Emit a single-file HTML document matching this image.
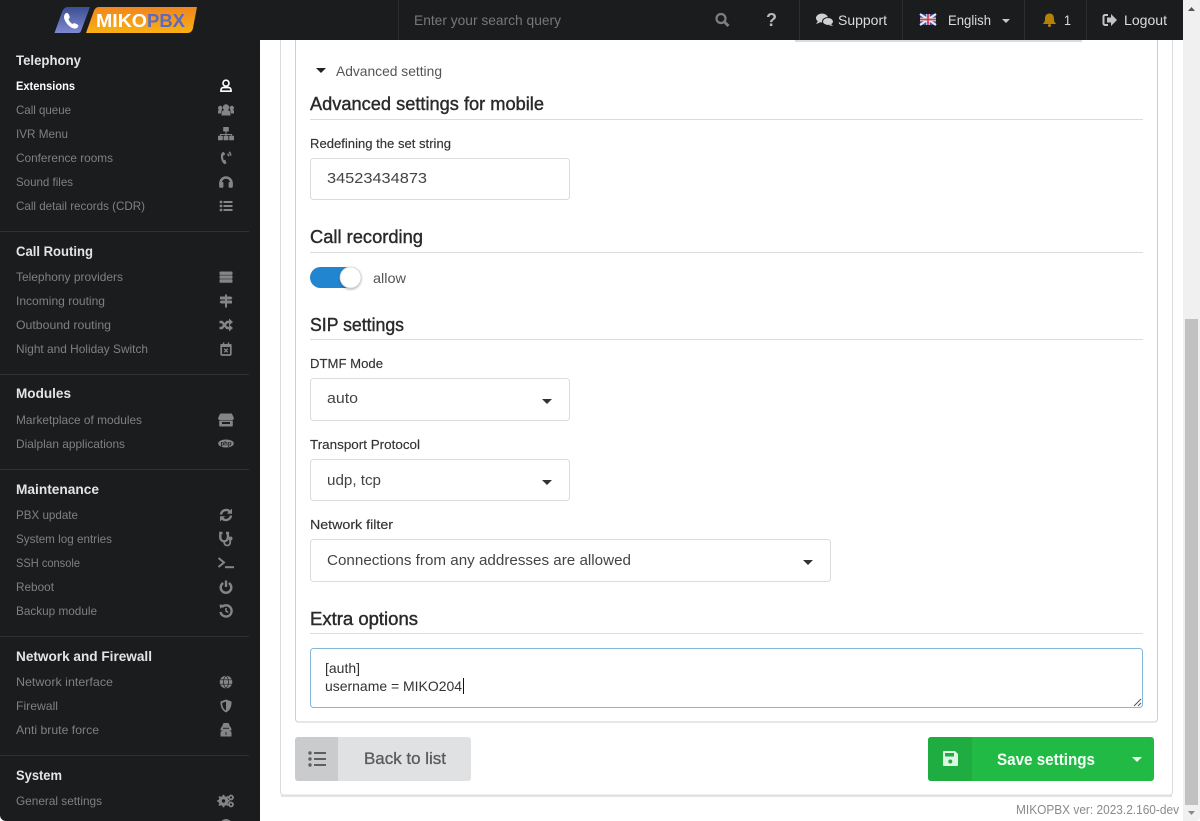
<!DOCTYPE html>
<html lang="en"><head><meta charset="utf-8"><title>MikoPBX</title>
<style>
html,body{margin:0;padding:0;width:1200px;height:821px;overflow:hidden;background:#fff}
svg{position:absolute;left:0;top:0;display:block}
text{font-family:"Liberation Sans",sans-serif;white-space:pre}
.h{font-size:13.5px;font-weight:700;fill:#e4e4e4}
.i{font-size:12px;fill:#808080}
.t{font-size:14px;fill:#dcdcdc}
.hd{font-size:18px;fill:#2a2a2a;stroke:#2a2a2a;stroke-width:.4}
.l{font-size:13px;fill:#333;stroke:#333;stroke-width:.15}
.v{font-size:15px;fill:#444}
.ic{fill:#858585}
.st{fill:none;stroke:#858585;stroke-width:2.400}
</style></head><body>
<svg width="1200" height="821" viewBox="0 0 1200 821" xmlns="http://www.w3.org/2000/svg">
<defs>
<linearGradient id="o" x1="0" y1="0" x2="0" y2="1"><stop offset="0" stop-color="#ef8520"/><stop offset="1" stop-color="#f9b113"/></linearGradient>
<linearGradient id="b" x1="0" y1="0" x2="0" y2="1"><stop offset="0" stop-color="#3c4f92"/><stop offset="1" stop-color="#7f88d2"/></linearGradient>
<filter id="sh" x="-30%" y="-30%" width="160%" height="160%"><feDropShadow dx="0" dy="1" stdDeviation="1" flood-color="#000" flood-opacity=".35"/></filter>
</defs>

<!-- main card -->
<rect x="281" y="795" width="891" height="2" fill="#e4e4e4"/>
<rect x="280.500" y="20" width="892" height="775" rx="3" fill="#fff" stroke="#dcdcdc"/>
<rect x="295.500" y="20" width="862" height="702" rx="3" fill="#fff" stroke="#cfcfcf"/>

<!-- advanced -->
<path d="M316 68h10l-5 5z" fill="#222"/>
<text x="336" y="76" font-size="14" fill="#555" textLength="106" lengthAdjust="spacingAndGlyphs">Advanced setting</text>
<text class="hd" x="310" y="110" textLength="234" lengthAdjust="spacingAndGlyphs">Advanced settings for mobile</text>
<rect x="310" y="119" width="833" height="1" fill="#dcdcdc"/>
<text class="l" x="310" y="148" textLength="141" lengthAdjust="spacingAndGlyphs">Redefining the set string</text>
<rect x="310.500" y="158.500" width="259" height="41" rx="3" fill="#fff" stroke="#dcdcdc"/>
<text class="v" x="327" y="183" textLength="100" lengthAdjust="spacingAndGlyphs">34523434873</text>

<text class="hd" x="310" y="243" textLength="113" lengthAdjust="spacingAndGlyphs">Call recording</text>
<rect x="310" y="252" width="833" height="1" fill="#dcdcdc"/>
<rect x="310" y="267" width="51" height="21" rx="10.500" fill="#2185d0"/>
<circle cx="350.500" cy="277.500" r="10.500" fill="#fff" stroke="#d4d4d5" stroke-width=".8" filter="url(#sh)"/>
<text x="373" y="283" font-size="14" fill="#555" textLength="33" lengthAdjust="spacingAndGlyphs">allow</text>

<text class="hd" x="310" y="331" textLength="94" lengthAdjust="spacingAndGlyphs">SIP settings</text>
<rect x="310" y="339" width="833" height="1" fill="#dcdcdc"/>
<text class="l" x="310" y="368" textLength="73" lengthAdjust="spacingAndGlyphs">DTMF Mode</text>
<rect x="310.500" y="378.500" width="259" height="42" rx="3" fill="#fff" stroke="#dcdcdc"/>
<text class="v" x="327" y="403" textLength="31" lengthAdjust="spacingAndGlyphs">auto</text>
<path d="M542 399h10l-5 5z" fill="#333"/>
<text class="l" x="310" y="449" textLength="110" lengthAdjust="spacingAndGlyphs">Transport Protocol</text>
<rect x="310.500" y="459.500" width="259" height="41" rx="3" fill="#fff" stroke="#dcdcdc"/>
<text class="v" x="327" y="485" textLength="54" lengthAdjust="spacingAndGlyphs">udp, tcp</text>
<path d="M542 480h10l-5 5z" fill="#333"/>
<text class="l" x="310" y="529" textLength="83" lengthAdjust="spacingAndGlyphs">Network filter</text>
<rect x="310.500" y="539.500" width="520" height="42" rx="3" fill="#fff" stroke="#dcdcdc"/>
<text class="v" x="327" y="565" textLength="304" lengthAdjust="spacingAndGlyphs">Connections from any addresses are allowed</text>
<path d="M803 560h10l-5 5z" fill="#333"/>

<text class="hd" x="310" y="625" textLength="108" lengthAdjust="spacingAndGlyphs">Extra options</text>
<rect x="310" y="633" width="833" height="1" fill="#dcdcdc"/>
<rect x="310.500" y="648.500" width="832" height="59" rx="3" fill="#fff" stroke="#85b7d9"/>
<text x="325" y="673" font-size="14" fill="#333" textLength="35" lengthAdjust="spacingAndGlyphs">[auth]</text>
<text x="325" y="691" font-size="14" fill="#333" textLength="137" lengthAdjust="spacingAndGlyphs">username = MIKO204</text>
<rect x="463" y="678" width="1" height="16" fill="#111"/>
<path d="M1134 706l7-7M1138 706l3-3" stroke="#555" stroke-width="1" fill="none"/>

<!-- buttons -->
<path d="M298 737h40v44h-40a3 3 0 0 1-3-3v-38a3 3 0 0 1 3-3z" fill="#cacbcd"/>
<path d="M338 737h130a3 3 0 0 1 3 3v38a3 3 0 0 1-3 3h-130z" fill="#e0e1e2"/>
<g fill="#5f5f5f"><circle cx="310" cy="753" r="1.700"/><circle cx="310" cy="759" r="1.700"/><circle cx="310" cy="765" r="1.700"/><rect x="314" y="752" width="12" height="2"/><rect x="314" y="758" width="12" height="2"/><rect x="314" y="764" width="12" height="2"/></g>
<text x="364" y="764" font-size="17" fill="#5a5a5a" stroke="#5a5a5a" stroke-width=".3" textLength="82" lengthAdjust="spacingAndGlyphs">Back to list</text>
<rect x="928" y="737" width="226" height="44" rx="3" fill="#21ba45"/>
<path d="M931 737h41v44h-41a3 3 0 0 1-3-3v-38a3 3 0 0 1 3-3z" fill="#1fac40"/>
<path d="M944 751h11l3 3v11a1 1 0 0 1-1 1h-13a1 1 0 0 1-1-1v-13a1 1 0 0 1 1-1z" fill="#dff5e4"/>
<rect x="945" y="753" width="9" height="3.500" fill="#1fac40"/><circle cx="950.300" cy="761.500" r="2" fill="#1fac40"/>
<text x="997" y="765" font-size="17" font-weight="700" fill="#f4fff6" textLength="98" lengthAdjust="spacingAndGlyphs">Save settings</text>
<path d="M1132 757h10l-5 5z" fill="#f0fff3"/>
<text x="1016" y="814" font-size="13" fill="#8a8a8a" textLength="163" lengthAdjust="spacingAndGlyphs">MIKOPBX ver: 2023.2.160-dev</text>

<!-- scrollbar -->
<rect x="1183" y="0" width="17" height="821" fill="#f0f0f0"/>
<rect x="1185" y="319" width="13" height="486" fill="#c1c1c1"/>
<path d="M1188 11l3.500-4 3.500 4z" fill="#555"/>
<path d="M1188 811l3.500 4 3.500-4z" fill="#8a8a8a"/>
<path d="M1200 821v-4a4 4 0 0 1-4 4z" fill="#fff"/>

<!-- header -->
<rect x="795" y="38" width="287" height="4" fill="#000" opacity=".14"/>
<rect x="260" y="0" width="923" height="40" fill="#1b1c1d"/>
<g fill="#2d2e2f"><rect x="259" y="0" width="1" height="40"/><rect x="398" y="0" width="1" height="40"/><rect x="799" y="0" width="1" height="40"/><rect x="902" y="0" width="1" height="40"/><rect x="1024" y="0" width="1" height="40"/><rect x="1086" y="0" width="1" height="40"/></g>
<text x="414" y="25" font-size="14" fill="#787878" textLength="147" lengthAdjust="spacingAndGlyphs">Enter your search query</text>
<circle cx="721" cy="18.500" r="4.500" fill="none" stroke="#7e7e7e" stroke-width="2.200"/><path d="M724.500 22l4 4" stroke="#7e7e7e" stroke-width="2.800"/>
<text x="771.500" y="26" font-size="18" font-weight="700" fill="#b8b8b8" text-anchor="middle">?</text>
<ellipse cx="822" cy="18" rx="6" ry="4.500" fill="#d0d0d0"/><path d="M818 21l-2 3 4-1.500z" fill="#d0d0d0"/>
<ellipse cx="828" cy="21.500" rx="5.500" ry="4" fill="#d0d0d0" stroke="#1b1c1d"/><path d="M831 24l2 2-4-.8z" fill="#d0d0d0"/>
<text class="t" x="838" y="25" textLength="49" lengthAdjust="spacingAndGlyphs">Support</text>
<rect x="920" y="14" width="16" height="11" fill="#3c4f9c"/>
<path d="M920 14l16 11M936 14l-16 11" stroke="#e8e8f0" stroke-width="2.200"/><path d="M928 14v11M920 19.500h16" stroke="#e8e8f0" stroke-width="3.400"/><path d="M928 14v11M920 19.500h16" stroke="#cc4055" stroke-width="1.800"/>
<text class="t" x="948" y="25" textLength="43" lengthAdjust="spacingAndGlyphs">English</text>
<path d="M1002 19h8l-4 4z" fill="#c8c8c8"/>
<path d="M1049.500 13.500c3.500 0 4.500 2.500 4.500 5.500 0 3 1 3.500 2.200 5h-13.400c1.200-1.500 2.200-2 2.200-5 0-3 1-5.500 4.500-5.500z" fill="#b58105"/><circle cx="1049.500" cy="25.500" r="1.500" fill="#b58105"/>
<text class="t" x="1064" y="25" textLength="7" lengthAdjust="spacingAndGlyphs">1</text>
<path d="M1108 15h-3a1.500 1.500 0 0 0-1.500 1.500v7a1.500 1.500 0 0 0 1.500 1.500h3" fill="none" stroke="#c4c4c4" stroke-width="2"/>
<path d="M1107 17.500h4v-3.500l6 6-6 6v-3.500h-4z" fill="#c4c4c4"/>
<text class="t" x="1124" y="25" textLength="43" lengthAdjust="spacingAndGlyphs">Logout</text>

<!-- sidebar -->
<rect x="0" y="0" width="260" height="821" fill="#1b1c1d"/>
<path d="M0 821v-6a6 6 0 0 0 6 6z" fill="#fff"/>
<path d="M68 7h22l-9 24c-.5 1.500-1.500 2-3 2H54.500l7.500-21c1-3 3-5 6-5z" fill="url(#b)"/>
<path d="M65 14c2-2 3-1 4 1s1 3-.5 4c.5 2 2 4 4 5 1-1 2-1 4 0 2 1 2.500 2 1 3.500-1 1.500-4 1.500-7-.5-3-2-6-6-6.500-9.500 0-1.500.500-3 1-3.500z" fill="#fff"/>
<path d="M99 7h98l-4 21c-.5 3-2.500 5-5.500 5H86l7.500-21c1-3 2.500-5 5.500-5z" fill="url(#o)"/>
<text x="96" y="27" font-size="18.500" font-weight="700" fill="#fff" textLength="51" lengthAdjust="spacingAndGlyphs">MIKO</text>
<text x="147" y="27" font-size="18.500" font-weight="700" fill="#5d6ac4" textLength="38" lengthAdjust="spacingAndGlyphs">PBX</text>

<g fill="#2f3031"><rect y="231" width="249" height="1"/><rect y="374" width="249" height="1"/><rect y="469" width="249" height="1"/><rect y="636" width="249" height="1"/><rect y="755" width="249" height="1"/></g>

<text class="h" x="16" y="65" textLength="65" lengthAdjust="spacingAndGlyphs">Telephony</text>
<text x="16" y="90" font-size="12" font-weight="700" fill="#fff" textLength="59" lengthAdjust="spacingAndGlyphs">Extensions</text>
<text class="i" x="16" y="114" textLength="55" lengthAdjust="spacingAndGlyphs">Call queue</text>
<text class="i" x="16" y="138" textLength="52" lengthAdjust="spacingAndGlyphs">IVR Menu</text>
<text class="i" x="16" y="162" textLength="97" lengthAdjust="spacingAndGlyphs">Conference rooms</text>
<text class="i" x="16" y="186" textLength="57" lengthAdjust="spacingAndGlyphs">Sound files</text>
<text class="i" x="16" y="210" textLength="129" lengthAdjust="spacingAndGlyphs">Call detail records (CDR)</text>
<text class="h" x="16" y="256" textLength="77" lengthAdjust="spacingAndGlyphs">Call Routing</text>
<text class="i" x="16" y="281" textLength="107" lengthAdjust="spacingAndGlyphs">Telephony providers</text>
<text class="i" x="16" y="305" textLength="89" lengthAdjust="spacingAndGlyphs">Incoming routing</text>
<text class="i" x="16" y="329" textLength="95" lengthAdjust="spacingAndGlyphs">Outbound routing</text>
<text class="i" x="16" y="353" textLength="132" lengthAdjust="spacingAndGlyphs">Night and Holiday Switch</text>
<text class="h" x="16" y="398" textLength="55" lengthAdjust="spacingAndGlyphs">Modules</text>
<text class="i" x="16" y="424" textLength="126" lengthAdjust="spacingAndGlyphs">Marketplace of modules</text>
<text class="i" x="16" y="448" textLength="109" lengthAdjust="spacingAndGlyphs">Dialplan applications</text>
<text class="h" x="16" y="494" textLength="83" lengthAdjust="spacingAndGlyphs">Maintenance</text>
<text class="i" x="16" y="519" textLength="62" lengthAdjust="spacingAndGlyphs">PBX update</text>
<text class="i" x="16" y="543" textLength="96" lengthAdjust="spacingAndGlyphs">System log entries</text>
<text class="i" x="16" y="567" textLength="64" lengthAdjust="spacingAndGlyphs">SSH console</text>
<text class="i" x="16" y="591" textLength="38" lengthAdjust="spacingAndGlyphs">Reboot</text>
<text class="i" x="16" y="615" textLength="81" lengthAdjust="spacingAndGlyphs">Backup module</text>
<text class="h" x="16" y="661" textLength="136" lengthAdjust="spacingAndGlyphs">Network and Firewall</text>
<text class="i" x="16" y="686" textLength="97" lengthAdjust="spacingAndGlyphs">Network interface</text>
<text class="i" x="16" y="710" textLength="42" lengthAdjust="spacingAndGlyphs">Firewall</text>
<text class="i" x="16" y="734" textLength="83" lengthAdjust="spacingAndGlyphs">Anti brute force</text>
<text class="h" x="16" y="780" textLength="46" lengthAdjust="spacingAndGlyphs">System</text>
<text class="i" x="16" y="805" textLength="86" lengthAdjust="spacingAndGlyphs">General settings</text>
<text class="i" x="16" y="830" textLength="70" lengthAdjust="spacingAndGlyphs">File editor</text>

<!-- sidebar icons -->
<g transform="translate(226,86)"><circle cy="-2.800" r="3" fill="none" stroke="#fff" stroke-width="1.700"/><path d="M-5 5.200v-1.200a2.500 2.500 0 0 1 2.500-2.500h5a2.500 2.500 0 0 1 2.500 2.500v1.200z" fill="none" stroke="#fff" stroke-width="1.700"/></g>
<g transform="translate(226,110)" class="ic"><circle cy="-2.500" r="3.200"/><circle cx="-5.800" cy="-2" r="2.200"/><circle cx="5.800" cy="-2" r="2.200"/><path d="M-4.500 5.500v-2.500a3.200 3.200 0 0 1 3.200-3h2.600a3.200 3.200 0 0 1 3.200 3v2.500z"/><path d="M-8 3.500v-2a1.800 1.800 0 0 1 1.800-1.800h2.200l-1.200 3.800zM8 3.500v-2a1.800 1.800 0 0 0-1.800-1.800h-2.200l1.200 3.800z"/></g>
<g transform="translate(226,134)" class="ic"><rect x="-2.800" y="-7" width="5.600" height="4.500" rx=".6"/><rect x="-8" y="1.800" width="4.800" height="4.400" rx=".6"/><rect x="-2.400" y="1.800" width="4.800" height="4.400" rx=".6"/><rect x="3.200" y="1.800" width="4.800" height="4.400" rx=".6"/><path d="M-.5-2.500h1v2.500H6.100V1.800h-1V1H.5v.8h-1V1h-4.600v.8h-1V0H-.5z"/></g>
<g transform="translate(226,158)" class="ic"><path d="M-1-4.500l-1.800-1.700c-1.700 1-2.600 3-2.200 6 .4 3 1.700 5.300 3.500 6.400l2-.9-1.200-3.600-1.500.4c-.7-1.300-.9-3.200-.6-4.500l1.500-.6z"/><path d="M1.500-4.200a3 3 0 0 1 1.200 2.400M3.200-6.200a5.200 5.200 0 0 1 1.400 3.900" fill="none" stroke="#858585" stroke-width="1.500"/></g>
<g transform="translate(226,182)"><path d="M-5.500 3v-2a5.500 5.500 0 0 1 11 0v2" fill="none" stroke="#858585" stroke-width="2.600"/><rect x="-6.800" y="0" width="4.200" height="5.800" rx="1" class="ic"/><rect x="2.600" y="0" width="4.200" height="5.800" rx="1" class="ic"/></g>
<g transform="translate(226,206)" class="ic"><circle cx="-5" cy="-4" r="1.400"/><circle cx="-5" cy="0" r="1.400"/><circle cx="-5" cy="4" r="1.400"/><rect x="-2.500" y="-5" width="9" height="2"/><rect x="-2.500" y="-1" width="9" height="2"/><rect x="-2.500" y="3" width="9" height="2"/></g>
<g transform="translate(226,277)" class="ic"><rect x="-6.500" y="-5.500" width="13" height="3.400" rx=".8"/><rect x="-6.500" y="-1.600" width="13" height="3.400" rx=".8"/><rect x="-6.500" y="2.300" width="13" height="3.400" rx=".8"/></g>
<g transform="translate(226,301)" class="ic"><rect x="-1" y="-6.500" width="2" height="13"/><path d="M-6-4.500h11l1.500 1.500-1.500 1.500h-11z"/><path d="M6-.5h-11l-1.500 1.500 1.500 1.500h11z"/></g>
<g transform="translate(226,325)"><path d="M-6.500-3h2.500l5 6h2.500M-6.500 3h2.500l5-6h2.500" class="st"/><path d="M3-6.500l4 3.500-4 3.500zM3-.5l4 3.500-4 3.500z" class="ic"/></g>
<g transform="translate(226,349)"><rect x="-4.800" y="-4" width="9.600" height="10" rx="1" fill="none" stroke="#858585" stroke-width="1.700"/><rect x="-5.500" y="-5" width="11" height="3" class="ic"/><rect x="-3.200" y="-6.500" width="1.500" height="2.500" class="ic"/><rect x="1.700" y="-6.500" width="1.500" height="2.500" class="ic"/><path d="M-1.800-.3l3.600 3.600M1.800-.3l-3.600 3.600" stroke="#858585" stroke-width="1.300"/></g>
<g transform="translate(226,420)" class="ic"><path d="M-5.800-6.500h11.600l2 4.200a2 2 0 0 1-2 2.500h-11.600a2 2 0 0 1-2-2.500z"/><path d="M-6.800.8h13.600v4.700a1 1 0 0 1-1 1h-11.600a1 1 0 0 1-1-1zM-4 2v2h8V2z" fill-rule="evenodd"/></g>
<g transform="translate(226,443.500)"><ellipse rx="7.800" ry="4" class="ic"/><text x="0" y="2" font-size="6" font-weight="700" fill="#1b1c1d" text-anchor="middle">php</text></g>
<g transform="translate(226,515)"><path d="M-5-.5a5.200 5.200 0 0 1 8.800-3M5 .5a5.200 5.200 0 0 1-8.800 3" class="st"/><path d="M6-6.500v5.200h-5.200zM-6 6.500v-5.200h5.200z" class="ic"/></g>
<g transform="translate(226,539)"><path d="M-3.500-6h-2.200v4.500a3.800 3.800 0 0 0 7.600 0V-6H0" class="st"/><path d="M-1.800 2.500v1a3 3 0 0 0 6 0V1" fill="none" stroke="#858585" stroke-width="1.800"/><circle cx="4.500" cy="-.5" r="2" class="ic"/></g>
<g transform="translate(226,563)"><path d="M-7.500-5l5.500 4.500-5.500 4.500" fill="none" stroke="#858585" stroke-width="2"/><rect x="-1" y="3.200" width="9" height="2" class="ic"/></g>
<g transform="translate(226,587)"><path d="M-2.800-4a5.300 5.300 0 1 0 5.600 0" class="st"/><rect x="-1.200" y="-6.500" width="2.400" height="6.500" class="ic"/></g>
<g transform="translate(226,611)"><path d="M-4-4a5.600 5.600 0 1 1-1.500 5" class="st"/><path d="M-6.500-6.500l5 .5-4.200 3.800z" class="ic"/><path d="M0-3v3l2.200 1.500" fill="none" stroke="#858585" stroke-width="1.600"/></g>
<g transform="translate(226,682)"><circle r="6.300" class="ic"/><path d="M-6.300-2.200h12.600M-6.300 2.200h12.600M0-6.300c-3.500 3.500-3.500 9 0 12.600M0-6.300c3.500 3.500 3.500 9 0 12.600" fill="none" stroke="#1b1c1d" stroke-width=".7"/></g>
<g transform="translate(226,706)"><path d="M0-6.500l5.500 2c.3 5-1.500 9-5.500 11-4-2-5.800-6-5.500-11z" class="ic"/><path d="M0-4.500l-3.800 1.500c0 3.500 1.200 6 3.800 7.500z" fill="#1b1c1d"/></g>
<g transform="translate(226,730)" class="ic"><path d="M-2.500-7h5l1.500 3.500a5 5 0 0 1 1.500 4h-11a5 5 0 0 1 1.500-4z"/><path d="M-5.500 6.500v-4a3 3 0 0 1 2.500-2h6a3 3 0 0 1 2.500 2v4z"/><rect x="-3" y="-2.200" width="6" height=".9" fill="#1b1c1d"/><rect x="-.4" y="2" width=".8" height="3" fill="#1b1c1d"/></g>
<g transform="translate(226,801)"><circle cx="-2.500" cy="0" r="3.400" fill="none" stroke="#858585" stroke-width="3.200"/><path d="M-2.500-6.300v12.600M-8.800 0H3.800M-7-4.500l9 9M2-4.500l-9 9" stroke="#858585" stroke-width="1.800"/><circle cx="-2.500" cy="0" r="1.700" fill="#1b1c1d"/><circle cx="5" cy="-3.500" r="2" fill="none" stroke="#858585" stroke-width="1.800"/><circle cx="5" cy="3.500" r="2" fill="none" stroke="#858585" stroke-width="1.800"/></g>
<circle cx="226" cy="825" r="6" class="ic"/>
</svg>
</body></html>
